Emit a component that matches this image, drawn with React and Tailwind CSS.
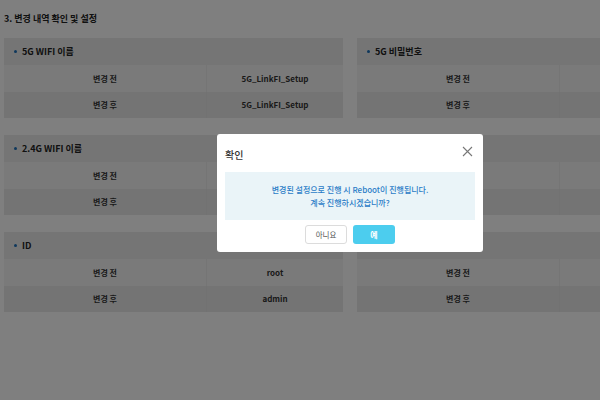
import React from 'react';

const FONT = { fontFamily: '"Noto Sans CJK KR", "Noto Sans", sans-serif' };

const CARDS = [
  [
    { title: '5G WIFI 이름', before: '5G_LinkFI_Setup', after: '5G_LinkFI_Setup' },
    { title: '5G 비밀번호', before: '', after: '' },
  ],
  [
    { title: '2.4G WIFI 이름', before: '', after: '' },
    { title: '', before: '', after: '' },
  ],
  [
    { title: 'ID', before: 'root', after: 'admin' },
    { title: '', before: '', after: '' },
  ],
];

const Card = ({ card }) => (
  <div className="w-[339px] shrink-0 text-[8px] font-bold text-[#333]">
    <div className="h-[27px] bg-[#ebebeb] flex items-center pl-[10px] gap-[5px] text-[9px] text-[#222]">
      {card.title && <span className="w-[3px] h-[3px] rounded-full bg-[#1d6fb8]" />}
      {card.title}
    </div>
    <div className="h-[27px] bg-[#f4f4f4] grid grid-cols-[203px_1fr]">
      <div className="flex items-center justify-center border-r border-[#ebebeb]">변경 전</div>
      <div className="flex items-center justify-center">{card.before}</div>
    </div>
    <div className="h-[26px] bg-[#e9e9e9] grid grid-cols-[203px_1fr]">
      <div className="flex items-center justify-center border-r border-[#e4e4e4]">변경 후</div>
      <div className="flex items-center justify-center">{card.after}</div>
    </div>
  </div>
);

const App = () => {
  return (
    <div className="relative w-[600px] h-[400px] overflow-hidden bg-white" style={FONT}>
      <div className="w-[720px] px-[4px]">
        <div className="h-[36px] flex items-center text-[9px] font-bold text-[#222] pt-[1px]">
          3. 변경 내역 확인 및 설정
        </div>
        <div className="flex flex-col gap-[17px] mt-[2px]">
          {CARDS.map((row, i) => (
            <div key={i} className="flex gap-[14px]">
              {row.map((c, j) => <Card key={j} card={c} />)}
            </div>
          ))}
        </div>
      </div>

      {/* overlay */}
      <div className="absolute inset-0 bg-black/50" />

      {/* modal */}
      <div className="absolute left-[217px] top-[134px] w-[266px] h-[118px] bg-white rounded-[3px] px-[8px]">
        <div className="h-[38px] flex items-center justify-between">
          <span className="text-[10px] font-medium text-[#333] mt-[3px]">확인</span>
          <svg width="11" height="11" viewBox="0 0 11 11" className="mr-[2px] -mt-[3px]">
            <path d="M1 1 L10 10 M10 1 L1 10" stroke="#777" strokeWidth="1.1" />
          </svg>
        </div>
        <div className="h-[48px] bg-[#eaf4f8] flex flex-col items-center justify-center text-[8px] leading-[13px] font-medium text-[#2a7cc7]">
          <span>변경된 설정으로 진행 시 Reboot이 진행됩니다.</span>
          <span>계속 진행하시겠습니까?</span>
        </div>
        <div className="flex justify-center gap-[6px] mt-[5px]">
          <button className="w-[42px] h-[19px] border border-[#dcdcdc] rounded-[3px] bg-white text-[7.5px] text-[#555]">아니요</button>
          <button className="w-[42px] h-[19px] rounded-[3px] bg-[#4ccdee] text-[8px] font-bold text-white">예</button>
        </div>
      </div>
    </div>
  );
};

export default App;
